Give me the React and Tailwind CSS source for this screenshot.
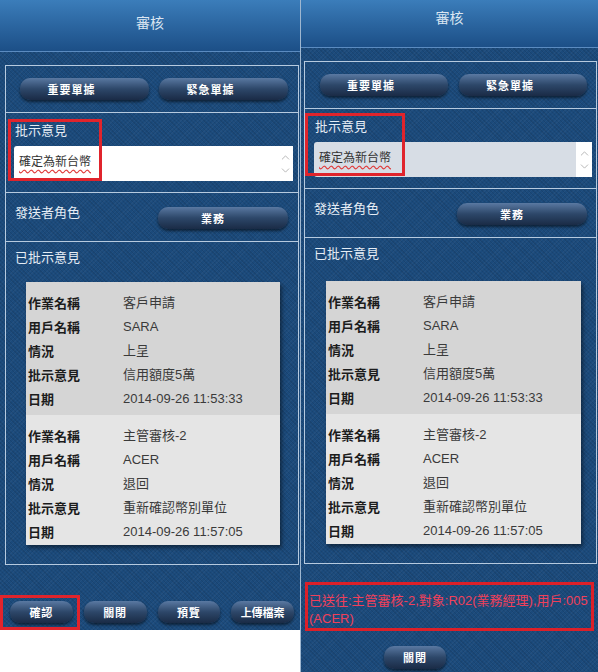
import { ChevronUp, ChevronDown } from "lucide-react";

const records = [
  {
    bg: "bg-[#d5d5d5]",
    pad: "pt-[9px] pb-[4px]",
    rows: [
      ["作業名稱", "客戶申請"],
      ["用戶名稱", "SARA"],
      ["情況", "上呈"],
      ["批示意見", "信用額度5萬"],
      ["日期", "2014-09-26 11:53:33"],
    ],
  },
  {
    bg: "bg-[#e5e5e5]",
    pad: "pt-[9px] pb-[1px]",
    rows: [
      ["作業名稱", "主管審核-2"],
      ["用戶名稱", "ACER"],
      ["情況", "退回"],
      ["批示意見", "重新確認幣別單位"],
      ["日期", "2014-09-26 11:57:05"],
    ],
  },
];

const layouts = {
  left: {
    header: "h-[52px] pt-[12px]",
    box: "ml-[5px] mr-[1px]",
    grid: "pl-[14px] pr-[10px] gap-[10px]",
    sec3: "pr-[10px]",
    ta: "pl-[8px] pr-[5px]",
    taBg: "bg-white",
    mark: "left-[2px] top-[6px] w-[94px] h-[62px]",
    card: "ml-[20px] mr-[18px] mt-[16px]",
  },
  right: {
    header: "h-[48px] pt-[7px]",
    box: "ml-[3px] mr-[1px]",
    grid: "pl-[15px] pr-[9px] gap-[11px]",
    sec3: "pr-[9px]",
    ta: "pl-[9px] pr-[4px]",
    taBg: "bg-[#d7dde5]",
    mark: "left-0 top-[4px] w-[100px] h-[63px]",
    card: "ml-[21px] mr-[15px] mt-[19px]",
  },
};

const texture =
  "bg-[#1b4a7b] bg-[image:repeating-linear-gradient(45deg,rgba(0,0,0,0.09)_0_1px,transparent_1px_3px),repeating-linear-gradient(-45deg,rgba(255,255,255,0.035)_0_1px,transparent_1px_3px)]";

const NavButton = ({ children, className = "" }) => (
    <div className={`h-[22px] rounded-[10px] bg-gradient-to-b from-[#5a79a2] via-[#2d4769] to-[#1a2b46] shadow-[0_2px_3px_rgba(0,0,0,0.55)] flex items-center justify-center text-[11px] font-bold text-white tracking-[1px] ${className}`}>
        {children}
    </div>
);

const RecordCard = ({ margin }) => (
    <div className={`${margin} shadow-[2px_3px_4px_rgba(0,0,0,0.45)]`}>
        {records.map((rec, i) => (
            <div key={i} className={`${rec.bg} ${rec.pad} pl-[2px]`}>
                {rec.rows.map(([label, value]) => (
                    <div key={label} className="flex h-[24px] items-center">
                        <span className="w-[95px] text-[13px] font-semibold text-[#1c1c1c]">{label}</span>
                        <span className="text-[13px] text-[#3a3a3a] font-['Liberation_Sans','Noto_Sans_CJK_TC',sans-serif]">{value}</span>
                    </div>
                ))}
            </div>
        ))}
    </div>
);

const Screen = ({ side }) => {
    const l = layouts[side];
    return (
        <>
            <div className={`${l.header} border-b border-[#5b8bc0] bg-gradient-to-b from-[#3b7dba] to-[#1c4f87] text-center text-[14px] leading-[20px] text-[#dbe6f2]`}>
                審核
            </div>
            <div className={`${l.box} mt-[13px] border border-[#b6cadf]`}>
                <div className={`grid grid-cols-2 ${l.grid} pt-[12px] pb-[12px] border-b border-[#b6cadf]`}>
                    <NavButton className="pr-[26px]">重要單據</NavButton>
                    <NavButton className="pr-[26px]">緊急單據</NavButton>
                </div>

                <div className={`relative ${l.ta} pt-[8px] pb-[11px] border-b border-[#b6cadf]`}>
                    <div className="pl-[1px] h-[18px] leading-[18px] text-[13px] text-[#e6edf5]">批示意見</div>
                    <div className={`mt-[7px] h-[35px] flex ${l.taBg} rounded-l-[3px]`}>
                        <div className="flex-1 pl-[5px] pt-[7px] text-[12px] leading-[16px] text-[#333]">
                            <span className="underline decoration-wavy decoration-[#e03a3a] underline-offset-[3px]">確定為新台幣</span>
                        </div>
                        <div className="w-[16px] bg-white flex flex-col items-center justify-center text-[#a8a8a8]">
                            <ChevronUp size={13} strokeWidth={1.5} />
                            <ChevronDown size={13} strokeWidth={1.5} />
                        </div>
                    </div>
                    <div className={`absolute ${l.mark} border-[3px] border-[#e0242c]`} />
                </div>

                <div className={`flex justify-between pl-[9px] ${l.sec3} pt-[10px] pb-[12px] border-b border-[#b6cadf]`}>
                    <span className="h-[18px] leading-[18px] text-[13px] text-[#e6edf5]">發送者角色</span>
                    <NavButton className="mt-[4px] w-[130px] pr-[20px]">業務</NavButton>
                </div>

                <div className="pt-[6px] pb-[19px]">
                    <div className="pl-[9px] h-[18px] leading-[18px] text-[13px] text-[#e6edf5]">已批示意見</div>
                    <RecordCard margin={l.card} />
                </div>
            </div>
        </>
    );
};

export default function App() {
    return (
        <div className="flex w-[598px] h-[672px] bg-white font-['Noto_Sans_CJK_TC',sans-serif]">
            <div className="w-[300px] flex flex-col">
                <div className={`${texture} pb-[7px]`}>
                    <Screen side="left" />
                    <div className="relative mt-[36px] grid grid-cols-4 gap-[11px] pl-[10px] pr-[6px]">
                        <NavButton>確認</NavButton>
                        <NavButton>關閉</NavButton>
                        <NavButton>預覽</NavButton>
                        <NavButton className="tracking-normal">上傳檔案</NavButton>
                        <div className="absolute left-0 top-[-6px] w-[80px] h-[35px] border-[3px] border-[#e0242c]" />
                    </div>
                </div>
                <div className="flex-1 bg-white" />
            </div>

            <div className={`w-[298px] h-[672px] border-l border-[#9fb7d0] ${texture}`}>
                <Screen side="right" />
                <div className="ml-[4px] mt-[18px] w-[289px] h-[49px] border-[3px] border-[#dc2029] pt-[7px] pl-[1px] text-[13px] leading-[18px] text-[#f0405a] font-['Liberation_Sans','Noto_Sans_CJK_TC',sans-serif] whitespace-nowrap">
                    已送往:主管審核-2,對象:R02(業務經理),用戶:005
                    <br />
                    (ACER)
                </div>
                <NavButton className="ml-[83px] mt-[15px] w-[62px] h-[23px]">關閉</NavButton>
            </div>
        </div>
    );
}
